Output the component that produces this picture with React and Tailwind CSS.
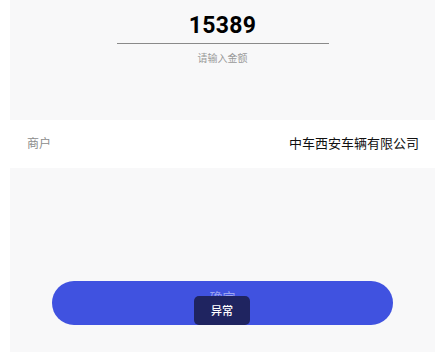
export default function App() {
  return (
    <div className="w-[445px] h-[352px] bg-white px-[10px] overflow-hidden" style={{ fontFamily: '"Noto Sans", "Noto Sans CJK SC", sans-serif' }}>
      <div className="bg-[#f8f8f9] h-[120px] flex flex-col items-center pt-[10px]">
        <div className="text-[23px] leading-[32px] font-bold text-black tracking-[0.3px]" style={{ fontFamily: 'Roboto, "Noto Sans", sans-serif' }}>15389</div>
        <div className="w-[212px] h-px bg-[#8a8a8a] mt-[1px]"></div>
        <div className="text-[10px] leading-[14px] text-[#9a9a9a] mt-[7px]">请输入金额</div>
      </div>
      <div className="bg-white h-[48px] flex items-center justify-between pl-[17px] pr-[16px]">
        <span className="text-[12px] text-[#8c8c8c]">商户</span>
        <span className="text-[13px] text-[#111]">中车西安车辆有限公司</span>
      </div>
      <div className="bg-[#f8f8f9] h-[184px] pt-[113px] px-[42px]">
        <div className="relative h-[44px] rounded-full bg-[#4052e0] flex items-center justify-center">
          <span className="text-[13px] text-[#9aa3ef] -mt-[10px]">确定</span>
          <div className="absolute left-[142px] top-[15px] w-[56px] h-[29px] rounded-[5px] bg-[#1f2460] flex items-center justify-center">
            <span className="text-[11px] text-white font-medium mt-[1px]">异常</span>
          </div>
        </div>
      </div>
    </div>
  );
}
